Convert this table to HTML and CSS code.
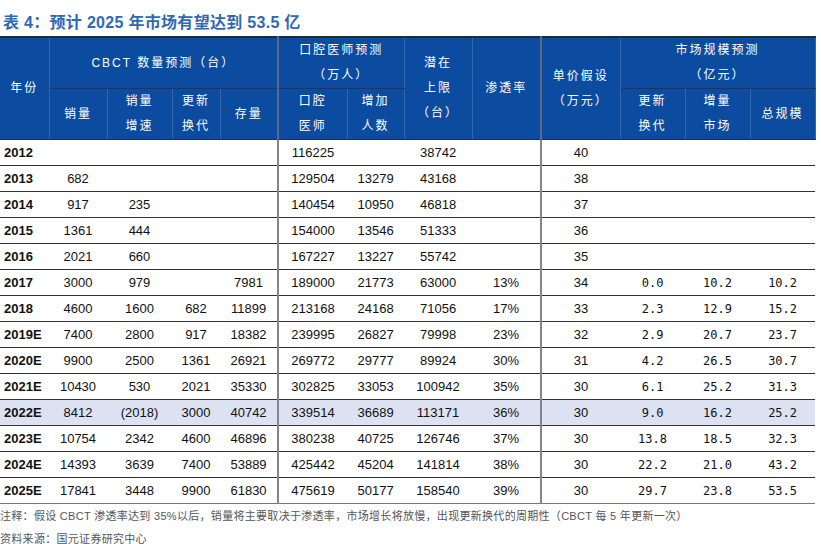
FILE: index.html
```html
<!DOCTYPE html>
<html lang="zh-CN">
<head>
<meta charset="utf-8">
<link rel="stylesheet" href="styles.css">
</head>
<body>
<div class="page">
  <h1 class="title">表 4：预计 2025 年市场有望达到 53.5 亿</h1>
  <table class="tbl">
    <colgroup>
      <col style="width:49px"><col style="width:58px"><col style="width:65px"><col style="width:48px"><col style="width:58px">
      <col style="width:69px"><col style="width:57px"><col style="width:68px"><col style="width:69px">
      <col style="width:79px"><col style="width:65px"><col style="width:65px"><col style="width:65px">
    </colgroup>
    <thead>
      <tr class="h1">
        <th rowspan="2" class="year-h">年份</th>
        <th colspan="4" class="grp sep">CBCT 数量预测（台）</th>
        <th colspan="2" class="grp">口腔医师预测<br>（万人）</th>
        <th rowspan="2">潜在<br>上限<br>（台）</th>
        <th rowspan="2" class="sep">渗透率</th>
        <th rowspan="2">单价假设<br>（万元）</th>
        <th colspan="3" class="grp">市场规模预测<br>（亿元）</th>
      </tr>
      <tr class="h2">
        <th>销量</th>
        <th>销量<br>增速</th>
        <th>更新<br>换代</th>
        <th class="sep">存量</th>
        <th>口腔<br>医师</th>
        <th>增加<br>人数</th>
        <th>更新<br>换代</th>
        <th>增量<br>市场</th>
        <th>总规模</th>
      </tr>
    </thead>
    <tbody>
      <tr><td class="y">2012</td><td></td><td></td><td></td><td class="sep"></td><td>116225</td><td></td><td>38742</td><td class="sep"></td><td>40</td><td class="m"></td><td class="m"></td><td class="m"></td></tr>
      <tr><td class="y">2013</td><td>682</td><td></td><td></td><td class="sep"></td><td>129504</td><td>13279</td><td>43168</td><td class="sep"></td><td>38</td><td class="m"></td><td class="m"></td><td class="m"></td></tr>
      <tr><td class="y">2014</td><td>917</td><td>235</td><td></td><td class="sep"></td><td>140454</td><td>10950</td><td>46818</td><td class="sep"></td><td>37</td><td class="m"></td><td class="m"></td><td class="m"></td></tr>
      <tr><td class="y">2015</td><td>1361</td><td>444</td><td></td><td class="sep"></td><td>154000</td><td>13546</td><td>51333</td><td class="sep"></td><td>36</td><td class="m"></td><td class="m"></td><td class="m"></td></tr>
      <tr><td class="y">2016</td><td>2021</td><td>660</td><td></td><td class="sep"></td><td>167227</td><td>13227</td><td>55742</td><td class="sep"></td><td>35</td><td class="m"></td><td class="m"></td><td class="m"></td></tr>
      <tr><td class="y">2017</td><td>3000</td><td>979</td><td></td><td class="sep">7981</td><td>189000</td><td>21773</td><td>63000</td><td class="sep">13%</td><td>34</td><td class="m">0.0</td><td class="m">10.2</td><td class="m">10.2</td></tr>
      <tr><td class="y">2018</td><td>4600</td><td>1600</td><td>682</td><td class="sep">11899</td><td>213168</td><td>24168</td><td>71056</td><td class="sep">17%</td><td>33</td><td class="m">2.3</td><td class="m">12.9</td><td class="m">15.2</td></tr>
      <tr><td class="y">2019E</td><td>7400</td><td>2800</td><td>917</td><td class="sep">18382</td><td>239995</td><td>26827</td><td>79998</td><td class="sep">23%</td><td>32</td><td class="m">2.9</td><td class="m">20.7</td><td class="m">23.7</td></tr>
      <tr><td class="y">2020E</td><td>9900</td><td>2500</td><td>1361</td><td class="sep">26921</td><td>269772</td><td>29777</td><td>89924</td><td class="sep">30%</td><td>31</td><td class="m">4.2</td><td class="m">26.5</td><td class="m">30.7</td></tr>
      <tr><td class="y">2021E</td><td>10430</td><td>530</td><td>2021</td><td class="sep">35330</td><td>302825</td><td>33053</td><td>100942</td><td class="sep">35%</td><td>30</td><td class="m">6.1</td><td class="m">25.2</td><td class="m">31.3</td></tr>
      <tr class="hl"><td class="y">2022E</td><td>8412</td><td>(2018)</td><td>3000</td><td class="sep">40742</td><td>339514</td><td>36689</td><td>113171</td><td class="sep">36%</td><td>30</td><td class="m">9.0</td><td class="m">16.2</td><td class="m">25.2</td></tr>
      <tr><td class="y">2023E</td><td>10754</td><td>2342</td><td>4600</td><td class="sep">46896</td><td>380238</td><td>40725</td><td>126746</td><td class="sep">37%</td><td>30</td><td class="m">13.8</td><td class="m">18.5</td><td class="m">32.3</td></tr>
      <tr><td class="y">2024E</td><td>14393</td><td>3639</td><td>7400</td><td class="sep">53889</td><td>425442</td><td>45204</td><td>141814</td><td class="sep">38%</td><td>30</td><td class="m">22.2</td><td class="m">21.0</td><td class="m">43.2</td></tr>
      <tr class="last"><td class="y">2025E</td><td>17841</td><td>3448</td><td>9900</td><td class="sep">61830</td><td>475619</td><td>50177</td><td>158540</td><td class="sep">39%</td><td>30</td><td class="m">29.7</td><td class="m">23.8</td><td class="m">53.5</td></tr>
    </tbody>
  </table>
  <p class="note">注释：假设 CBCT 渗透率达到 35%以后，销量将主要取决于渗透率，市场增长将放慢，出现更新换代的周期性（CBCT 每 5 年更新一次）</p>
  <p class="note src">资料来源：国元证券研究中心</p>
</div>
</body>
</html>
```

FILE: styles.css
```css
html, body {
  margin: 0;
  padding: 0;
  background: #ffffff;
}
.page {
  width: 821px;
  font-family: "Liberation Sans", "Noto Sans CJK SC", sans-serif;
}
.title {
  margin: 0;
  height: 36px;
  box-sizing: border-box;
  padding: 13px 0 0 3px;
  font-size: 16px;
  line-height: 20px;
  font-weight: bold;
  color: #2f69b2;
  letter-spacing: 0.3px;
  font-family: "Liberation Sans", "Noto Sans CJK SC", sans-serif;
}
.tbl {
  border-collapse: collapse;
  table-layout: fixed;
  width: 815px;
}
.tbl th {
  background: #0b4ca1;
  color: #ffffff;
  font-weight: normal;
  font-size: 12px;
  line-height: 25px;
  letter-spacing: 2px;
  padding: 0;
  text-align: center;
  vertical-align: middle;
  border-left: 1px solid #3566ad;
  border-right: 1px solid #3566ad;
  font-family: "Liberation Sans", "Noto Sans CJK SC", sans-serif;
}
.tbl thead tr.h1 th {
  border-top: 2px solid #2a2a2a;
  height: 50px;
}
.tbl thead tr.h1 th.grp {
  border-bottom: 1px solid #1a3566;
}
.tbl thead tr.h2 th {
  height: 50px;
  border-bottom: 1px solid #1f2f4a;
}
.tbl thead th[rowspan] {
  border-bottom: 1px solid #1f2f4a;
}
.tbl th.year-h {
  border-left: none;
}
.tbl th.sep {
  border-right: 2px solid #5b6a80;
}
.tbl td {
  height: 25px;
  padding: 0;
  font-size: 13px;
  color: #111111;
  text-align: center;
  vertical-align: middle;
  border-bottom: 1px solid #333333;
  white-space: nowrap;
}
.tbl td.y {
  text-align: left;
  padding-left: 4px;
  font-weight: bold;
  font-size: 13px;
}
.tbl td.sep {
  border-right: 2px solid #858585;
}
.tbl td.m {
  font-family: "DejaVu Sans Mono", monospace;
  font-size: 12px;
}
.tbl tr.hl td {
  background: #dce2f2;
}
.tbl tr.last td {
  border-bottom: 1px solid #777777;
}
.note {
  margin: 0;
  font-size: 11px;
  color: #555555;
  line-height: 24px;
  letter-spacing: 0.3px;
  font-family: "Liberation Sans", "Noto Sans CJK SC", sans-serif;
}
.note.src {
  line-height: 18px;
  padding-top: 2px;
}
```
